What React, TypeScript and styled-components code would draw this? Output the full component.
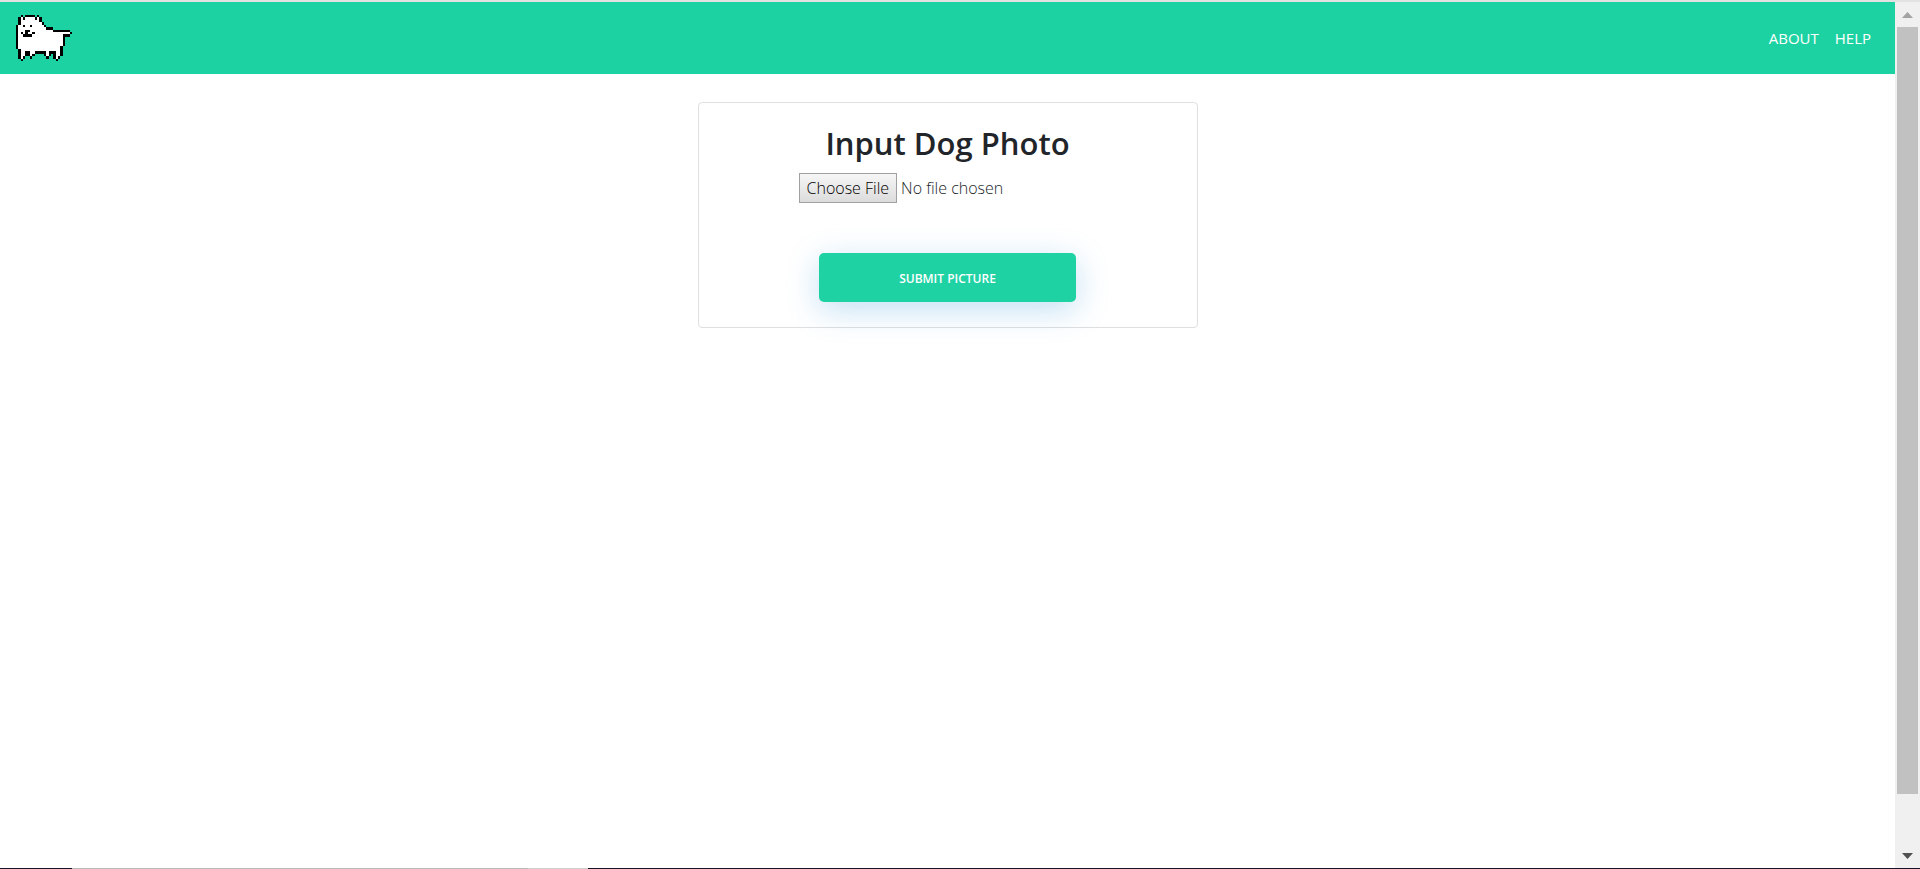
import React from "react";
import styled, { createGlobalStyle } from "styled-components";

const GlobalStyle = createGlobalStyle`
  *, *::before, *::after { box-sizing: border-box; }
  html, body, #root { height: 100%; }
  body {
    margin: 0;
    background: #fff;
    color: #212529;
    font-family: "Segoe UI", "Open Sans", "Noto Sans", sans-serif;
    font-size: 16px;
    line-height: 24px;
    overflow: hidden;
  }
`;

const Window = styled.div`
  display: flex;
  flex-direction: column;
  height: 100vh;
  border-top: 2px solid #e2e2e2;
`;

const Viewport = styled.div`
  display: flex;
  flex: 1;
  min-height: 0;
`;

const Page = styled.div`
  flex: 1;
  min-width: 0;
`;

const Navbar = styled.nav`
  display: flex;
  align-items: center;
  justify-content: space-between;
  height: 72px;
  padding: 0 24px 0 16px;
  background: #1dd2a2;
`;

const Brand = styled.a`
  display: flex;
`;

const NavLinks = styled.div`
  display: flex;
  gap: 16px;
`;

const NavLink = styled.a`
  color: #fff;
  font-size: 15px;
  text-decoration: none;
`;

const Card = styled.form`
  display: flex;
  flex-direction: column;
  align-items: center;
  width: 500px;
  max-width: 100%;
  margin: 28px auto 0;
  padding: 20px 20px 25px;
  border: 1px solid #dfdfdf;
  border-radius: 4px;
`;

const Title = styled.h2`
  margin: 0 0 10px;
  font-size: 31px;
  font-weight: 600;
  line-height: 40px;
`;

const FileInput = styled.input`
  width: 298px;
  height: 30px;
  margin-bottom: 50px;
  color: #212529;
  font: inherit;
  font-size: 16px;
  font-weight: 300;

  &::file-selector-button {
    height: 30px;
    margin: 0 4px 0 0;
    padding: 0 7px;
    border: 1px solid #a0a0a0;
    border-radius: 0;
    background: linear-gradient(#f6f6f6, #dcdcdc);
    color: #000;
    font: inherit;
  }
`;

const SubmitButton = styled.button`
  width: 257px;
  height: 49px;
  padding: 2px 0 0;
  border: 0;
  border-radius: 5px;
  background: #1fd2a3;
  box-shadow: 0 8px 32px rgba(52, 152, 219, 0.3);
  color: #fff;
  font: inherit;
  font-size: 12px;
  font-weight: 600;
  text-transform: uppercase;
`;

const Scrollbar = styled.div`
  display: flex;
  flex-direction: column;
  align-items: center;
  width: 25px;
  background: #f0f0f0;
`;

const Arrow = styled.svg`
  display: block;
  width: 11px;
  height: 25px;
`;

const Track = styled.div`
  flex: 1;
  width: 21px;
`;

const Thumb = styled.div`
  height: 94%;
  background: #c1c1c1;
`;

const Taskbar = styled.div`
  height: 1px;
  background: linear-gradient(
    to right,
    #191325 0 3.75%,
    #b9b9b9 3.75% 27.5%,
    #cfcfcf 27.5% 30.6%,
    #191325 30.6%
  );
`;

// Sprite rows: "#" is outline, "o" is fur, a space is transparent.
const DOG = [
  "  # #### #              ",
  " #o#oooo#o#             ",
  " #oooooooo#             ",
  " #ooooooooo#            ",
  "#oo#oo#ooooo#           ",
  "#oooooooooooo###        ",
  "#ooo##oooooooooo####### ",
  "#o#o#oo#ooooooooooooooo#",
  "#oo####ooooooooooooo### ",
  "#ooooooooooooooooooo#   ",
  "#ooooooooooooooooooo#   ",
  "#ooooooooooooooooooo#   ",
  "#ooooooooooooooooooo#   ",
  "#oooooooooooooooooo#    ",
  " #ooooooooooooooooo#    ",
  " #oo##oo#####o###oo#    ",
  " #oo##o#    #o# #oo#    ",
  " #o#  #      #  #o#     ",
  "  #              #      ",
];

function Dog() {
  return (
    <svg
      width="56"
      height="46"
      viewBox="0 0 24 19"
      preserveAspectRatio="none"
      shapeRendering="crispEdges"
      role="img"
      aria-label="Dog"
    >
      {DOG.flatMap((row, y) =>
        [...row].map((c, x) =>
          c === " " ? null : (
            <rect key={`${x}-${y}`} x={x} y={y} width="1" height="1" fill={c === "#" ? "#000" : "#fff"} />
          ),
        ),
      )}
    </svg>
  );
}

export default function App() {
  return (
    <>
      <GlobalStyle />
      <Window>
        <Viewport>
          <Page>
            <Navbar>
              <Brand href="#"><Dog /></Brand>
              <NavLinks>
                <NavLink href="#about">ABOUT</NavLink>
                <NavLink href="#help">HELP</NavLink>
              </NavLinks>
            </Navbar>
            <Card>
              <Title>Input Dog Photo</Title>
              <FileInput type="file" aria-label="Input Dog Photo" />
              <SubmitButton type="button">Submit Picture</SubmitButton>
            </Card>
          </Page>
          <Scrollbar aria-hidden="true">
            <Arrow viewBox="0 0 11 25"><path d="M0 16L5.500 10L11 16Z" fill="#a3a3a3" /></Arrow>
            <Track><Thumb /></Track>
            <Arrow viewBox="0 0 11 25"><path d="M0 10L5.500 16L11 10Z" fill="#505050" /></Arrow>
          </Scrollbar>
        </Viewport>
        <Taskbar />
      </Window>
    </>
  );
}
